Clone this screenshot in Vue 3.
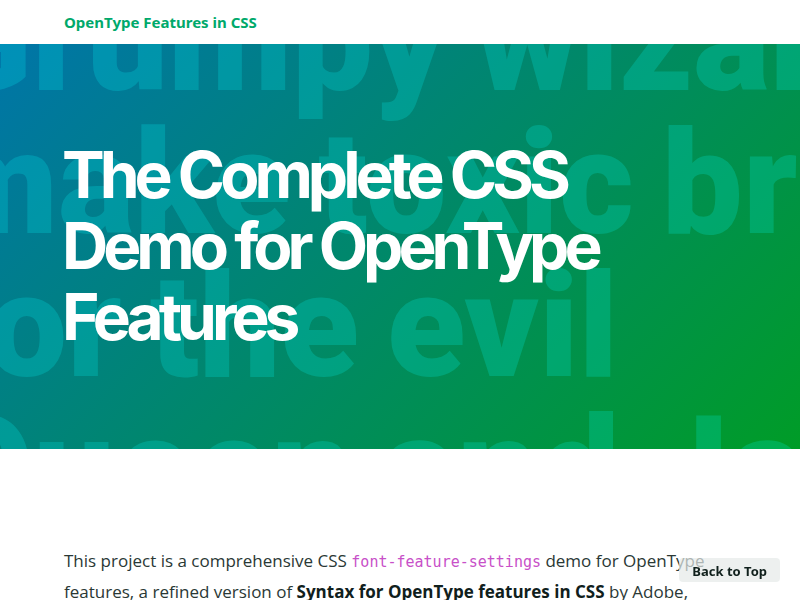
<script setup>
const backdropLines = [
  ['Grumpy', 'wizards'],
  ['make', 'toxic', 'brew'],
  ['for', 'the', 'evil'],
  ['Queen', 'and', 'Jack'],
]
</script>

<template>
  <div id="top" class="page">
    <header class="site-header">
      <a class="site-title" href="#top">OpenType Features in CSS</a>
    </header>

    <section class="hero">
      <div class="backdrop" aria-hidden="true">
        <div v-for="(line, i) in backdropLines" :key="i" class="backdrop-line">
          <span v-for="word in line" :key="word">{{ word }}</span>
        </div>
      </div>
      <h1>The Complete CSS Demo for OpenType Features</h1>
    </section>

    <main class="intro">
      <p>
        This project is a comprehensive CSS <code>font-feature-settings</code> demo for OpenType
        features, a refined version of <strong>Syntax for OpenType features in CSS</strong> by Adobe,
      </p>
    </main>

    <a class="back-to-top" href="#top">Back to Top</a>
  </div>
</template>

<style>
body {
  background: #fff;
}
</style>

<style scoped>
.page {
  height: 100vh;
  overflow: hidden;
  color: #10201c;
  font-family: "Noto Sans", "Open Sans", sans-serif;
}

.site-header {
  padding: 12px 64px;
  font-size: 15px;
  line-height: 20px;
}

.site-title {
  color: #00a96b;
  font-weight: 700;
  text-decoration: none;
}

.hero {
  position: relative;
  overflow: hidden;
  padding: 95px 64px 97px;
  background: linear-gradient(135deg, #0075a8, #009c27);
}

.backdrop {
  position: absolute;
  inset: -75px 0 auto -66px;
  color: rgba(0, 255, 255, 0.2);
  font-family: Roboto, sans-serif;
  font-size: 144px;
  font-weight: 900;
  line-height: 143px;
  white-space: nowrap;
  user-select: none;
}

.backdrop-line {
  display: flex;
  gap: 28px;
}

h1 {
  position: relative;
  max-width: 600px;
  margin: 0 0 0 -2px;
  color: #fff;
  font-family: Inter, sans-serif;
  font-size: 64px;
  font-weight: 700;
  letter-spacing: -5px;
  line-height: 71px;
}

.intro {
  padding: 96px 64px;
}

.intro p {
  max-width: 672px;
  margin: 0;
  color: #2a3835;
  font-family: "Open Sans", sans-serif;
  font-size: 17px;
  font-weight: 400;
  line-height: 31px;
}

.intro strong {
  color: #10201c;
  font-weight: 700;
}

.intro code {
  color: #c850c8;
  font-family: "DejaVu Sans Mono", monospace;
  font-size: 15px;
  line-height: 1;
}

.back-to-top {
  position: fixed;
  right: 20px;
  bottom: 18px;
  padding: 3px 13px 1px;
  border-radius: 4px;
  background: rgba(230, 233, 232, 0.7);
  color: #10201c;
  font-size: 13px;
  font-weight: 700;
  line-height: 20px;
  text-decoration: none;
}
</style>
